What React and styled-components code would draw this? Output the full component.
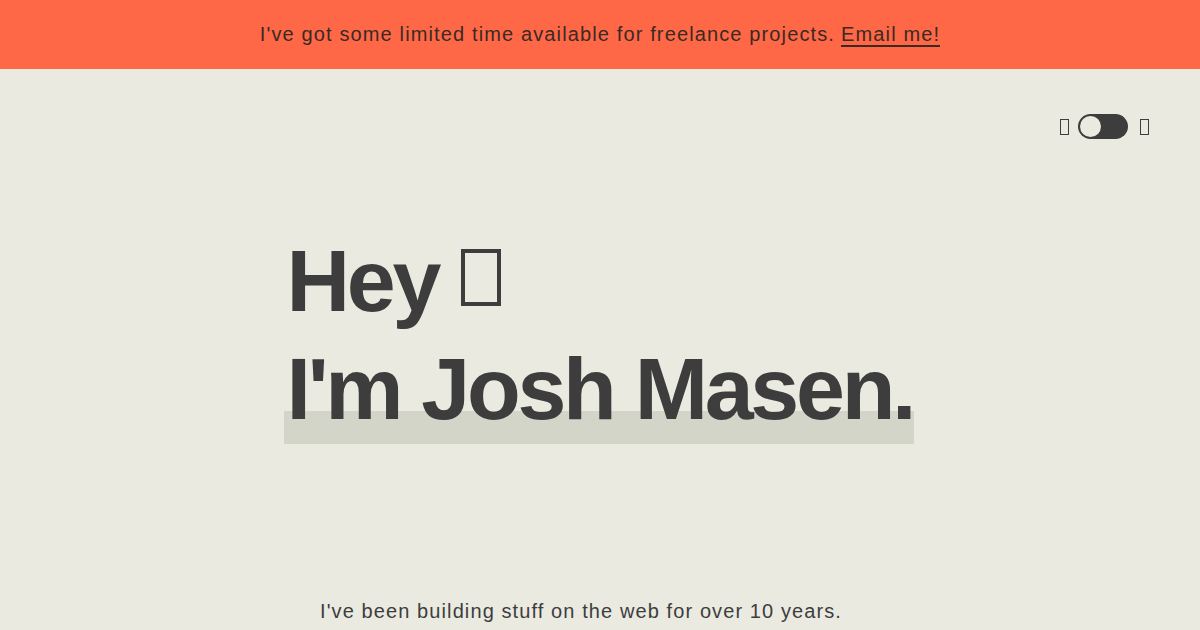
import styled, { createGlobalStyle } from 'styled-components'

const GlobalStyle = createGlobalStyle`
  body {
    margin: 0;
    background: #eaeae1;
    color: #3d3d3d;
    font-family: "Liberation Sans", Arial, sans-serif;
  }
`

const Banner = styled.div`
  height: 69px;
  background: #ff6847;
  display: flex;
  align-items: center;
  justify-content: center;
  font-size: 20px;
  color: #3a2a24;
  letter-spacing: 1.13px;
  & > a {
    color: inherit;
    margin-left: 6px;
    text-decoration: none;
    border-bottom: 2px solid #3a2a24;
    line-height: 22px;
  }
`

const Header = styled.header`
  display: flex;
  justify-content: flex-end;
  padding: 45px 51px 0 0;
`

const ThemeSwitch = styled.div`
  display: flex;
  align-items: center;
  gap: 9px;
  font-size: 16px;
`

// missing-glyph box, the way the emoji shows up in the original
const Glyph = styled.span`
  display: inline-flex;
  align-items: center;
  justify-content: center;
  box-sizing: border-box;
  width: ${({ $w }) => $w}px;
  height: ${({ $h }) => $h}px;
  border: ${({ $b }) => $b}px solid #3d3d3d;
  vertical-align: ${({ $lift }) => $lift || 0}px;
  overflow: hidden;
  font-size: ${({ $w }) => Math.round($w * 0.6)}px;
  line-height: 1;
  letter-spacing: 0;
  & > span {
    opacity: 0;
  }
`

const Track = styled.div`
  width: 50px;
  height: 25px;
  border-radius: 13px;
  background: #3d3d3d;
  display: flex;
  align-items: center;
  padding: 0 2px;
  box-sizing: border-box;
  margin-right: 3px;
`

const Knob = styled.span`
  width: 21px;
  height: 21px;
  border-radius: 50%;
  background: #eaeae1;
`

const Hero = styled.section`
  width: 630px;
  margin: 88px auto 0;
  padding-left: 3px;
`

const Title = styled.h1`
  margin: 0;
  font-size: 88px;
  font-weight: 700;
  line-height: 108px;
  letter-spacing: -3.3px;
`

const Wave = styled(Glyph)`
  margin-left: 2px;
`

const Name = styled.span`
  display: inline-block;
  margin-left: -3px;
  padding: 0 1px 4px 3px;
  background: linear-gradient(#d3d5c9, #d3d5c9) no-repeat;
  background-size: 100% 33px;
  background-position: left bottom 3px;
`

const Intro = styled.p`
  width: 560px;
  margin: 153px auto 0;
  font-size: 20px;
  letter-spacing: 1.1px;
`

export default function App() {
  return (
    <>
      <GlobalStyle />
      <Banner>
        I've got some limited time available for freelance projects.
        <a href="#">Email me!</a>
      </Banner>
      <Header>
        <ThemeSwitch>
          <Glyph $w={9} $h={16} $b={1.5}><span>☀</span></Glyph>
          <Track><Knob /></Track>
          <Glyph $w={9} $h={16} $b={1.5}><span>☾</span></Glyph>
        </ThemeSwitch>
      </Header>
      <Hero>
        <Title>
          Hey <Wave $w={40} $h={57} $b={4} $lift={26}><span>👋</span></Wave>
          <br />
          <Name>I'm Josh Masen.</Name>
        </Title>
      </Hero>
      <Intro>I've been building stuff on the web for over 10 years.</Intro>
    </>
  )
}
